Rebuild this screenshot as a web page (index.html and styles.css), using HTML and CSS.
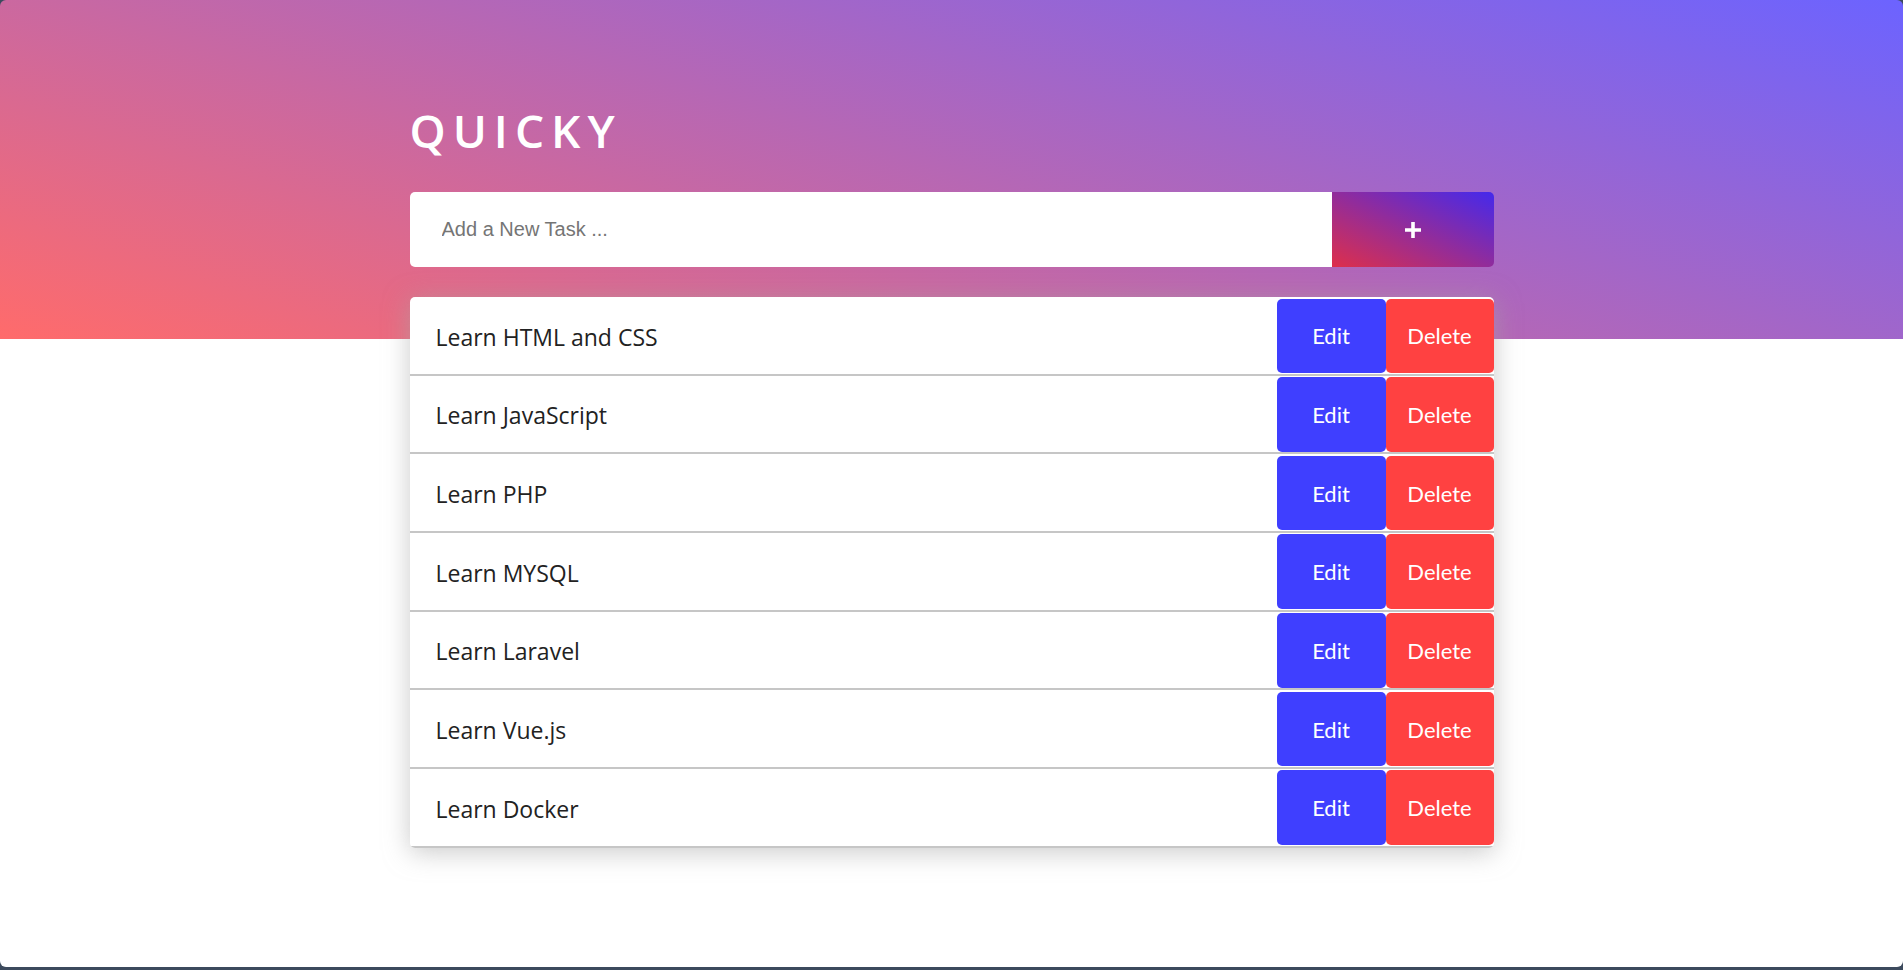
FILE: index.html
```html
<!DOCTYPE html>
<html lang="en">
<head>
<meta charset="utf-8">
<title>Quicky</title>
<link rel="stylesheet" href="styles.css">
</head>
<body>
<div class="app">
  <div class="container">
    <h1 class="title">QUICKY</h1>
    <form class="add-form">
      <input class="add-input" type="text" placeholder="Add a New Task ...">
      <button class="add-btn" type="button" aria-label="Add">
        <svg width="18" height="18" viewBox="0 0 18 18"><path d="M9 1v16M1 9h16" stroke="#fff" stroke-width="3.6" fill="none"/></svg>
      </button>
    </form>
    <ul class="task-list">
      <li class="task"><span class="task-text">Learn HTML and CSS</span><button class="btn btn-edit">Edit</button><button class="btn btn-delete">Delete</button></li>
      <li class="task"><span class="task-text">Learn JavaScript</span><button class="btn btn-edit">Edit</button><button class="btn btn-delete">Delete</button></li>
      <li class="task"><span class="task-text">Learn PHP</span><button class="btn btn-edit">Edit</button><button class="btn btn-delete">Delete</button></li>
      <li class="task"><span class="task-text">Learn MYSQL</span><button class="btn btn-edit">Edit</button><button class="btn btn-delete">Delete</button></li>
      <li class="task"><span class="task-text">Learn Laravel</span><button class="btn btn-edit">Edit</button><button class="btn btn-delete">Delete</button></li>
      <li class="task"><span class="task-text">Learn Vue.js</span><button class="btn btn-edit">Edit</button><button class="btn btn-delete">Delete</button></li>
      <li class="task"><span class="task-text">Learn Docker</span><button class="btn btn-edit">Edit</button><button class="btn btn-delete">Delete</button></li>
    </ul>
  </div>
</div>
</body>
</html>
```

FILE: styles.css
```css
* { box-sizing: border-box; }

html, body {
  margin: 0;
  padding: 0;
}

body {
  background: #3c4a5d;
  height: 970px;
  overflow: hidden;
}

.app {
  height: 967px;
  border-radius: 6px;
  overflow: hidden;
  padding-top: 99px;
  background: linear-gradient(18deg, #ff6b6b 0%, #6c63ff 100%) top left / 100% 339px no-repeat, #ffffff;
}

.container {
  width: 1084px;
  margin: 0 auto;
}

.title {
  margin: 0;
  font-family: "Open Sans", sans-serif;
  font-weight: 600;
  font-size: 46px;
  line-height: 62px;
  letter-spacing: 7px;
  color: #ffffff;
}

.add-form {
  display: flex;
  margin: 31px 0 0;
  height: 75px;
}

.add-input {
  flex: 1;
  border: none;
  outline: none;
  border-radius: 5px 0 0 5px;
  padding: 0 32px;
  font-family: "Liberation Sans", Arial, sans-serif;
  font-size: 20px;
  background: #ffffff;
  color: #333;
}

.add-input::placeholder {
  color: #757575;
}

.add-btn {
  width: 162px;
  border: none;
  border-radius: 0 5px 5px 0;
  background: linear-gradient(to right top, #de2f4b, #4429ec);
  display: flex;
  align-items: center;
  justify-content: center;
  padding: 0;
  cursor: pointer;
}

.task-list {
  list-style: none;
  margin: 30px 0 0;
  padding: 0;
  background: #ffffff;
  border-radius: 5px;
  box-shadow: 0 4px 26px rgba(165, 165, 165, 0.6);
  overflow: hidden;
}

.task {
  display: flex;
  align-items: stretch;
  height: 78.67px;
  border-bottom: 2px solid #c6c6c6;
}

.task-text {
  flex: 1;
  display: flex;
  align-items: center;
  padding: 3px 0 0 26px;
  font-family: "Open Sans", sans-serif;
  font-size: 23px;
  color: #222222;
}

.btn {
  margin: 1.5px 0 0.5px;
  border: none;
  border-radius: 5px;
  color: #ffffff;
  font-family: Lato, sans-serif;
  font-size: 22px;
  font-weight: 400;
  padding: 0;
  cursor: pointer;
}

.btn-edit {
  width: 109px;
  background: #3f3fff;
}

.btn-delete {
  width: 108px;
  background: #ff4141;
}
```
